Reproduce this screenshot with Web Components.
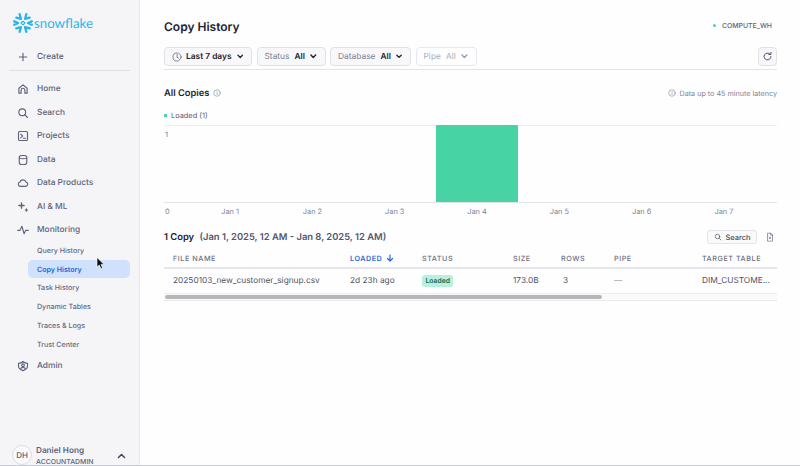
<!DOCTYPE html>
<html><head><meta charset="utf-8"><style>
html,body{margin:0;padding:0;width:800px;height:466px;overflow:hidden;background:#fefeff;font-family:Inter,"Liberation Sans",sans-serif;text-rendering:geometricPrecision}
</style></head><body>
<sf-app>
<sf-sidebar slot="side"></sf-sidebar>
<sf-main slot="main"></sf-main>
</sf-app>
<script>
const I={
create:'<path d="M8 3v10M3 8h10"/>',
home:'<path d="M2.500 13.500V7L8 2.500 13.500 7v6.500h-3V9.500a2.500 2.500 0 0 0-5 0v4z"/>',
search:'<circle cx="7" cy="7" r="4.500"/><path d="M10.500 10.500l3.500 3.500"/>',
projects:'<rect x="2" y="2" width="12" height="12" rx="1.500"/><path d="M5 5.500L7.500 8 5 10.500M8.500 11h3"/>',
data:'<rect x="3" y="2" width="10" height="12" rx="3"/><path d="M3 5.500c1.500 1.200 8.500 1.200 10 0"/>',
products:'<path d="M4.500 12.500a3 3 0 0 1-.6-5.900 4.400 4.400 0 0 1 8.200.2 2.900 2.900 0 0 1-.3 5.700z"/>',
ai:'<path d="M6 2.500v7M2.500 6h7" stroke-width="1.800"/><path d="M12.500 10.500v3M11 12h3" stroke-width="1.500"/>',
monitoring:'<path d="M1 8.500h3L6.500 3l3 10 2-4.500H15"/>',
admin:'<path d="M2 4.500C5 4.500 6.500 3.500 8 2c1.500 1.500 3 2.500 6 2.500V8c0 3-2.500 5-6 6.200-3.500-1.200-6-3.200-6-6.200z"/><circle cx="8" cy="7" r="1.800"/><path d="M5 11.500c1-2 5-2 6 0"/>'
};
const svg=(p,s=16,w=1.4,c='currentColor')=>`<svg width="${s}" height="${s}" viewBox="0 0 16 16" fill="none" stroke="${c}" stroke-width="${w}" stroke-linecap="round" stroke-linejoin="round" style="display:block;flex:none">${p}</svg>`;
class Base extends HTMLElement{
  constructor(){super();this.attachShadow({mode:'open'});}
}
class SfApp extends Base{connectedCallback(){this.shadowRoot.innerHTML=`<style>
:host{display:flex;width:800px;height:466px;position:relative;overflow:hidden}
.cursor{position:absolute;left:96px;top:257px}
.edge{position:absolute;left:0;right:0;bottom:0;height:1px;background:#c9ccd3}
</style><slot name="side"></slot><slot name="main"></slot>
<svg class="cursor" width="10" height="13" viewBox="0 0 10 13"><path d="M1 0.500v9.500l2.300-2 1.500 3.600 1.700-.7-1.500-3.500h3z" fill="#111" stroke="#fff" stroke-width=".6"/></svg>
<div class="edge"></div>`;}}
class SfNavItem extends Base{connectedCallback(){
this.shadowRoot.innerHTML=`<style>
:host{display:flex;align-items:center;height:23.600px;padding-left:17px;color:#5d6379;font-size:8.350px;font-weight:500;gap:8px}
</style>${svg(I[this.getAttribute('icon')],12,1.500)}<slot></slot>`;}}
class SfSubItem extends Base{connectedCallback(){
const a=this.hasAttribute('active');
this.shadowRoot.innerHTML=`<style>
:host{display:flex;align-items:center;height:18.800px;margin-left:28px;margin-right:9.500px;padding-left:9px;border-radius:5px;font-size:7.100px;font-weight:500;color:${a?'#2165d6':'#626880'};background:${a?'#cfe1fc':'transparent'};${a?'font-weight:600;':''}}
</style><slot></slot>`;}}
class SfSidebar extends Base{connectedCallback(){
this.shadowRoot.innerHTML=`<style>
:host{display:flex;flex-direction:column;width:140px;flex:none;height:466px;box-sizing:border-box;background:#f5f5f8;border-right:1px solid #e6e7ec}
.logo{display:flex;align-items:center;height:24px;margin:11px 0 0 13px;gap:1px;color:#29b5e8;font-family:Lato,"Open Sans",sans-serif;font-size:13.300px;font-weight:400}
.div{height:1px;background:#dfe0e6;margin:0 9px 6.300px 9px}
.top{height:27px;margin-top:8px;display:flex;flex-direction:column;justify-content:center}
.foot{margin-top:auto;display:flex;align-items:center;padding:6px 13px 0 12px;height:20px;gap:4px}
.av{width:18px;height:18px;border-radius:50%;border:1px solid #dcdde3;background:#fafafc;color:#565c72;font-size:8px;font-weight:500;display:flex;align-items:center;justify-content:center;flex:none;margin-top:-2px}
.who{display:flex;flex-direction:column;gap:3px;flex:1}
.n{font-size:8.200px;font-weight:600;color:#5d6379;line-height:9px}
.r{font-size:6.900px;font-weight:500;color:#5d6379;line-height:8px}
</style>
<div class="logo"><svg width="20" height="20" viewBox="0 0 24 24" fill="none" stroke="#29b5e8" stroke-width="2.800" stroke-linecap="round" stroke-linejoin="round" style="flex:none">
<path d="M8 1.500L9.500 7 4 5.500M16 1.500L14.500 7 20 5.500M8 22.500L9.500 17 4 18.500M16 22.500L14.500 17 20 18.500"/>
<path d="M1.500 10L6 12 1.500 14M22.500 10L18 12 22.500 14"/><path d="M12 9.700L14.300 12 12 14.300 9.700 12z" stroke-width="1.500"/></svg><span>snowflake</span></div>
<div class="top"><sf-nav-item icon="create">Create</sf-nav-item></div>
<div class="div"></div>
<sf-nav-item icon="home">Home</sf-nav-item>
<sf-nav-item icon="search">Search</sf-nav-item>
<sf-nav-item icon="projects">Projects</sf-nav-item>
<sf-nav-item icon="data">Data</sf-nav-item>
<sf-nav-item icon="products">Data Products</sf-nav-item>
<sf-nav-item icon="ai">AI &amp; ML</sf-nav-item>
<sf-nav-item icon="monitoring" style="height:22px">Monitoring</sf-nav-item>
<sf-sub-item>Query History</sf-sub-item>
<sf-sub-item active>Copy History</sf-sub-item>
<sf-sub-item>Task History</sf-sub-item>
<sf-sub-item>Dynamic Tables</sf-sub-item>
<sf-sub-item>Traces &amp; Logs</sf-sub-item>
<sf-sub-item>Trust Center</sf-sub-item>
<sf-nav-item icon="admin" style="margin-top:.6px">Admin</sf-nav-item>
<div class="foot"><div class="av">DH</div><div class="who"><div class="n">Daniel Hong</div><div class="r">ACCOUNTADMIN</div></div>
<svg width="9" height="6" viewBox="0 0 9 6" fill="none" stroke="#40465a" stroke-width="1.500" stroke-linecap="round" stroke-linejoin="round"><path d="M1.500 4.500L4.500 1.500l3 3"/></svg></div>`;}}
class SfFilter extends Base{connectedCallback(){
const d=this.hasAttribute('disabled'),w=this.getAttribute('w');
this.shadowRoot.innerHTML=`<style>
:host{display:flex;align-items:center;box-sizing:border-box;height:19px;width:${w}px;padding:0 0 0 7px;border:1px solid ${d?'#e8e9ee':'#dfe1e7'};border-radius:4px;background:${d?'#fefeff':'#f8f8fa'};font-size:8.400px;gap:5px;flex:none;white-space:nowrap}
.l{color:${d?'#a9adbc':'#7a7f93'};font-weight:400}
.v{color:${d?'#a9adbc':'#1e2230'};font-weight:${d?400:600}}
.c{margin-left:auto;margin-right:8px;display:block}
</style><slot name="icon"></slot>${this.getAttribute('label')?`<span class="l">${this.getAttribute('label')}</span>`:''}<span class="v">${this.getAttribute('value')}</span>
<svg class="c" width="7" height="5" viewBox="0 0 7 5" fill="none" stroke="${d?'#9a9eae':'#1e2230'}" stroke-width="1.500" stroke-linecap="round" stroke-linejoin="round"><path d="M1 1l2.500 2.500L6 1"/></svg>`;}}
class SfChart extends Base{connectedCallback(){
const days=['Jan 1','Jan 2','Jan 3','Jan 4','Jan 5','Jan 6','Jan 7'];
this.shadowRoot.innerHTML=`<style>
:host{display:block;margin-top:9px}
.legend{display:flex;align-items:center;gap:4px;height:12px;font-size:7.400px;color:#565c72;padding-bottom:4px}
.dot{width:3px;height:3px;background:#48d3a5;border-radius:.5px}
.plot{position:relative;height:78px;box-sizing:border-box;border-top:1px solid #eeeff3;border-bottom:1px solid #e3e4ea;display:grid;grid-template-columns:repeat(7,82.300px);padding-left:25px}
.bar{grid-column:4;background:#48d3a5;margin-top:-1px;border-radius:1px 1px 0 0}
.y{position:absolute;left:1px;top:4px;font-size:7.400px;color:#6f7489}
.x{display:grid;grid-template-columns:25px repeat(7,82.300px);font-size:7.400px;color:#7d8296;height:17px;align-items:center}
.x span{text-align:center}.x span:first-child{text-align:left;padding-left:1px}
</style>
<div class="legend"><span class="dot"></span><span>Loaded (1)</span></div>
<div class="plot"><div class="y">1</div><div class="bar"></div></div>
<div class="x"><span>0</span>${days.map(d=>`<span>${d}</span>`).join('')}</div>`;}}
class SfTable extends Base{connectedCallback(){
const cols='177px 72px 91px 48px 53px 88px 1fr';
this.shadowRoot.innerHTML=`<style>
:host{display:block}
.r{display:grid;grid-template-columns:${cols};padding-left:9px;align-items:center}
.h{height:20px;box-sizing:border-box;border-bottom:2px solid #e6e7ec;font-size:7.200px;font-weight:500;letter-spacing:.55px;color:#6b7086}
.b{height:25px;box-sizing:border-box;border-bottom:1px solid #ecedf1;font-size:8.300px;color:#4d5267}
.sort{color:#2a6ad8;font-weight:600;display:flex;align-items:center;gap:4px}
.tag{display:inline-block;background:#b8f0de;color:#146a53;font-size:6.800px;font-weight:600;line-height:12px;padding:0 3.500px;border-radius:3px}
.track{height:7px;box-sizing:border-box;background:#fafafb;border-bottom:1px solid #e9eaee;padding:1px 0 0 1px}
.thumb{width:437px;height:4px;background:#b6b6b8;border-radius:2px}
.mut{color:#a9adbc}
</style>
<div class="r h"><span>FILE NAME</span><span class="sort">LOADED <svg width="8" height="8" viewBox="0 0 8 8" fill="none" stroke="#2a6ad8" stroke-width="1.200" stroke-linecap="round" stroke-linejoin="round"><path d="M4 1v6M1.500 4.500L4 7l2.500-2.500"/></svg></span><span>STATUS</span><span>SIZE</span><span>ROWS</span><span>PIPE</span><span>TARGET TABLE</span></div>
<div class="r b"><span>20250103_new_customer_signup.csv</span><span>2d 23h ago</span><span><span class="tag">Loaded</span></span><span>173.0B</span><span style="padding-left:2px">3</span><span class="mut">—</span><span>DIM_CUSTOME...</span></div>
<div class="track"><div class="thumb"></div></div>`;}}
class SfMain extends Base{connectedCallback(){
this.shadowRoot.innerHTML=`<style>
:host{display:block;flex:1;min-width:0;box-sizing:border-box;padding:0 23px 0 24px;background:#fefeff}
.head{display:flex;align-items:center;justify-content:space-between;height:42px;padding-top:5px}
h1{margin:0;font-size:12px;font-weight:600;color:#1e2230}
.wh{display:flex;align-items:center;gap:6px;font-size:6.900px;font-weight:500;color:#5d6379;margin:0 5px 1px 0}
.wh i{width:3px;height:3px;background:#48d3a5;border-radius:50%}
.filters{display:flex;gap:4.500px;height:19px;padding-bottom:3px;border-bottom:1px solid #e3e4ea}
.ref{margin-left:auto;width:19px;height:19px;box-sizing:border-box;border:1px solid #dfe1e7;border-radius:4px;background:#f8f8fa;display:flex;align-items:center;justify-content:center;color:#3a3f50}
.sec{display:flex;align-items:center;justify-content:space-between;margin-top:16px;height:14px}
.t{display:flex;align-items:center;gap:4px;font-size:9.300px;font-weight:600;color:#1e2230}
.lat{display:flex;align-items:center;gap:3px;font-size:7.200px;color:#7f8499}
.tb{display:flex;align-items:center;justify-content:space-between;height:24px;margin-top:5px}
.cnt{font-size:9.400px;font-weight:600;color:#1e2230}.cnt span{color:#50566b;margin-left:3px}
.tools{display:flex;align-items:center;gap:8px;padding-right:2px}
.s{display:flex;align-items:center;justify-content:center;gap:4px;box-sizing:border-box;width:50px;height:14px;border:1px solid #e3e4ea;border-radius:3px;background:#fafafb;font-size:7.400px;font-weight:500;color:#3a3f50}
</style>
<div class="head"><h1>Copy History</h1><div class="wh"><i></i>COMPUTE_WH</div></div>
<div class="filters">
<sf-filter w="88" value="Last 7 days"><span slot="icon" style="color:#5d6379;margin-right:-1px">${svg('<circle cx="8" cy="8" r="6.500"/><path d="M8 4v4.300l2.500 1.500"/>',10,1.200)}</span></sf-filter>
<sf-filter w="69" label="Status" value="All"></sf-filter>
<sf-filter w="81" label="Database" value="All"></sf-filter>
<sf-filter w="61" label="Pipe" value="All" disabled></sf-filter>
<div class="ref">${svg('<path d="M13 8a5 5 0 1 1-1.600-3.700M13 2v3h-3"/>',11,1.300)}</div>
</div>
<div class="sec"><div class="t">All Copies ${svg('<circle cx="8" cy="8" r="6.500"/><path d="M8 7.500v3.500M8 5v.2"/>',8,1.200,'#7f8499')}</div>
<div class="lat">${svg('<circle cx="8" cy="8" r="6.500"/><path d="M8 7.500v3.500M8 5v.2"/>',8,1.200,'#7f8499')}Data up to 45 minute latency</div></div>
<sf-chart></sf-chart>
<div class="tb"><div class="cnt">1 Copy <span>(Jan 1, 2025, 12 AM - Jan 8, 2025, 12 AM)</span></div>
<div class="tools"><div class="s">${svg('<circle cx="7" cy="7" r="4.500"/><path d="M10.500 10.500l3.500 3.500"/>',8,1.200)}Search</div>
${svg('<path d="M4 14V2h5.500L12 4.500V14zM9 2v3h3M6.500 8l3 3M9.500 8l-3 3"/>',10,1,'#5d6379')}</div></div>
<sf-table></sf-table>`;}}
customElements.define('sf-app',SfApp);
customElements.define('sf-nav-item',SfNavItem);
customElements.define('sf-sub-item',SfSubItem);
customElements.define('sf-sidebar',SfSidebar);
customElements.define('sf-filter',SfFilter);
customElements.define('sf-chart',SfChart);
customElements.define('sf-table',SfTable);
customElements.define('sf-main',SfMain);
</script>
</body></html>
